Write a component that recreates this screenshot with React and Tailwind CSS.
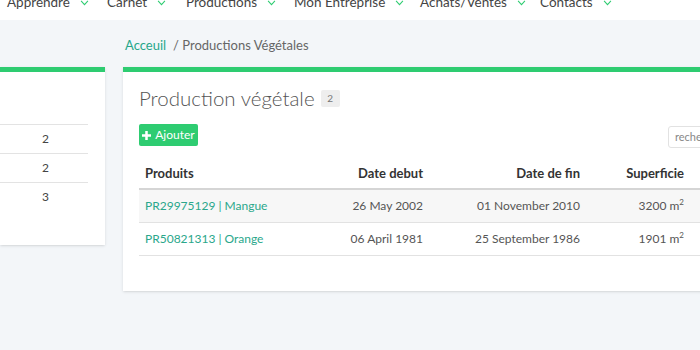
import React from 'react';

const font = { fontFamily: 'Lato, "Open Sans", sans-serif' };

function Chevron() {
    return (
        <svg className="w-[9px] h-[6px] ml-[10px] shrink-0 translate-y-[1px]" viewBox="0 0 10 7" fill="none" stroke="#2ecc71" strokeWidth="1.2">
            <path d="M1 1l4 4.5 4-4.5" />
        </svg>
    );
}

const menu = [
    { label: 'Apprendre', w: 'w-[100px]' },
    { label: 'Carnet', w: 'w-[79px]' },
    { label: 'Productions', w: 'w-[108px]' },
    { label: 'Mon Entreprise', w: 'w-[126px]' },
    { label: 'Achats/Ventes', w: 'w-[120px]' },
    { label: 'Contacts', w: 'w-[100px]' },
];

const rows = [
    { code: 'PR29975129 | Mangue', debut: '26 May 2002', fin: '01 November 2010', sup: '3200' },
    { code: 'PR50821313 | Orange', debut: '06 April 1981', fin: '25 September 1986', sup: '1901' },
];

export default function App() {
    return (
        <div className="w-[700px] h-[350px] overflow-hidden bg-[#f3f6f9] text-[#333]" style={font}>

            {/* Barre de navigation (coupée en haut) */}
            <div className="h-[20px] bg-white overflow-hidden">
                <div className="flex items-center pl-[7px] -mt-[10px] h-[24px] text-[13.5px] text-[#444] whitespace-nowrap">
                    {menu.map((m) => (
                        <div key={m.label} className={`flex items-center shrink-0 ${m.w}`}>
                            <span>{m.label}</span>
                            <Chevron />
                        </div>
                    ))}
                </div>
            </div>

            {/* Fil d'ariane */}
            <div className="h-[47px] flex items-center pl-[125px] pt-[4px] text-[13px]">
                <span className="text-[#26a68a]">Acceuil</span>
                <span className="ml-[7px] text-[#666]">/ Productions Végétales</span>
            </div>

            <div className="flex gap-[18px] items-start">

                {/* Carte gauche */}
                <div className="w-[105px] h-[178px] shrink-0 bg-white border-t-[5px] border-[#2ecc71] shadow-sm">
                    <div className="mt-[52px] mr-[17px] text-[12px] text-[#444]">
                        {['2', '2', '3'].map((n, i) => (
                            <div key={i} className="h-[29px] border-t border-[#e3e3e3] flex items-center justify-center pl-[3px]">
                                {n}
                            </div>
                        ))}
                    </div>
                </div>

                {/* Carte droite */}
                <div className="w-[620px] h-[224px] shrink-0 bg-white border-t-[5px] border-[#2ecc71] shadow-sm pl-[16px] pr-[16px]">
                    <div className="flex items-center mt-[12px] h-[28px]">
                        <h1 className="text-[20.5px] font-light text-[#555] leading-none">Production végétale</h1>
                        <span className="ml-[6px] bg-[#eeeeee] text-[#777] text-[10px] w-[19px] h-[17px] flex items-center justify-center rounded-[2px]">2</span>
                    </div>

                    <div className="flex items-start justify-between mt-[12px]">
                        <button className="h-[22px] w-[59px] bg-[#2ecc71] text-white text-[12px] rounded-[2px] flex items-center justify-center gap-[4px]">
                            <svg className="w-[9px] h-[9px]" viewBox="0 0 10 10" fill="white">
                                <path d="M3.6 0h2.8v3.6H10v2.8H6.4V10H3.6V6.4H0V3.6h3.6z" />
                            </svg>
                            Ajouter
                        </button>
                        <div className="h-[22px] w-[59px] mt-[2px] border border-[#e2e2e2] rounded-[3px] text-[11px] text-[#888] flex items-center pl-[6px]">
                            recherche
                        </div>
                    </div>

                    <table className="mt-[11px] w-[561px] text-[12px] border-collapse">
                        <thead>
                            <tr className="border-b-2 border-[#d5d5d5] h-[30px]">
                                <th className="text-left font-bold pl-[6px] text-[13px] w-[184px]">Produits</th>
                                <th className="text-right font-bold text-[13px] w-[100px]">Date debut</th>
                                <th className="text-right font-bold text-[13px] w-[157px]">Date de fin</th>
                                <th className="text-right font-bold text-[13px] w-[104px]">Superficie</th>
                                <th className="w-[16px]"></th>
                            </tr>
                        </thead>
                        <tbody>
                            {rows.map((r, i) => (
                                <tr key={r.code} className={`h-[33px] border-b border-[#e2e2e2] ${i === 0 ? 'bg-[#f7f7f7]' : ''}`}>
                                    <td className="pl-[6px] text-[#2aa78b]">{r.code}</td>
                                    <td className="text-right text-[#555]">{r.debut}</td>
                                    <td className="text-right text-[#555]">{r.fin}</td>
                                    <td className="text-right text-[#555]">{r.sup} m<sup className="text-[8px] -top-[5px]">2</sup></td>
                                    <td></td>
                                </tr>
                            ))}
                        </tbody>
                    </table>
                </div>
            </div>
        </div>
    );
}
